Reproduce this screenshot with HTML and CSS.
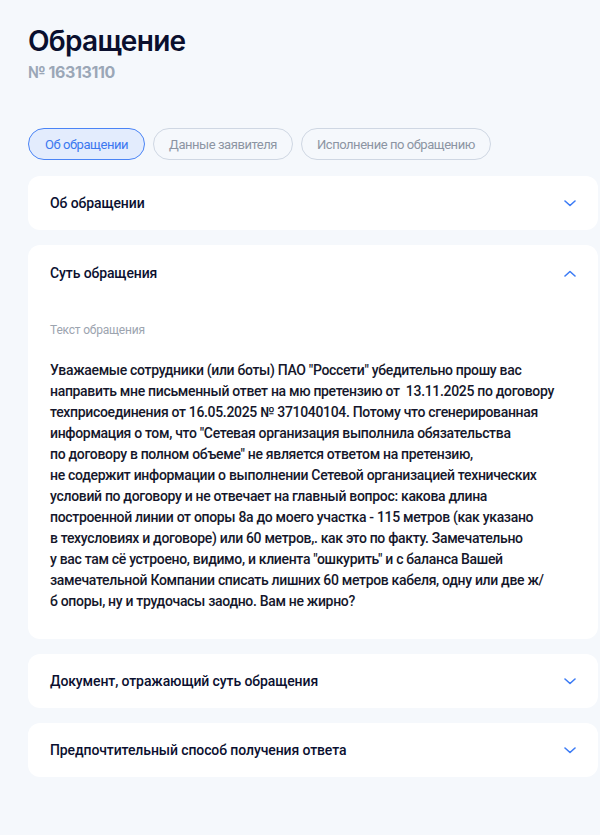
FILE: index.html
```html
<!DOCTYPE html>
<html lang="ru">
<head>
<meta charset="utf-8">
<title>Обращение</title>
<link rel="stylesheet" href="styles.css">
</head>
<body>
<main class="page">
  <header class="head">
    <h1 class="title">Обращение</h1>
    <div class="number">№ 16313110</div>
  </header>

  <nav class="tabs">
    <button class="tab tab-active">Об обращении</button>
    <button class="tab">Данные заявителя</button>
    <button class="tab">Исполнение по обращению</button>
  </nav>

  <section class="cards">
    <div class="card">
      <div class="card-head">
        <span class="card-title">Об обращении</span>
        <svg class="chev" width="12" height="7" viewBox="0 0 12 7"><path d="M1 1l5 4.5L11 1" fill="none" stroke="#3d7cf5" stroke-width="1.6" stroke-linecap="round" stroke-linejoin="round"/></svg>
      </div>
    </div>

    <div class="card card-open">
      <div class="card-head">
        <span class="card-title">Суть обращения</span>
        <svg class="chev" width="12" height="7" viewBox="0 0 12 7"><path d="M1 6l5-4.5L11 6" fill="none" stroke="#3d7cf5" stroke-width="1.6" stroke-linecap="round" stroke-linejoin="round"/></svg>
      </div>
      <div class="card-body">
        <div class="field-label">Текст обращения</div>
        <p class="field-text">Уважаемые сотрудники (или боты) ПАО "Россети" убедительно прошу вас<br>направить мне письменный ответ на мю претензию от&nbsp; 13.11.2025 по договору<br>техприсоединения от 16.05.2025 № 371040104. Потому что сгенерированная<br>информация о том, что "Сетевая организация выполнила обязательства<br>по договору в полном объеме" не является ответом на претензию,<br>не содержит информации о выполнении Сетевой организацией технических<br>условий по договору и не отвечает на главный вопрос: какова длина<br>построенной линии от опоры 8а до моего участка - 115 метров (как указано<br>в техусловиях и договоре) или 60 метров,. как это по факту. Замечательно<br>у вас там сё устроено, видимо, и клиента "ошкурить" и с баланса Вашей<br>замечательной Компании списать лишних 60 метров кабеля, одну или две ж/<br>б опоры, ну и трудочасы заодно. Вам не жирно?</p>
      </div>
    </div>

    <div class="card">
      <div class="card-head">
        <span class="card-title">Документ, отражающий суть обращения</span>
        <svg class="chev" width="12" height="7" viewBox="0 0 12 7"><path d="M1 1l5 4.5L11 1" fill="none" stroke="#3d7cf5" stroke-width="1.6" stroke-linecap="round" stroke-linejoin="round"/></svg>
      </div>
    </div>

    <div class="card">
      <div class="card-head">
        <span class="card-title">Предпочтительный способ получения ответа</span>
        <svg class="chev" width="12" height="7" viewBox="0 0 12 7"><path d="M1 1l5 4.5L11 1" fill="none" stroke="#3d7cf5" stroke-width="1.6" stroke-linecap="round" stroke-linejoin="round"/></svg>
      </div>
    </div>
  </section>
</main>
</body>
</html>
```

FILE: styles.css
```css
* { box-sizing: border-box; }

html, body {
  margin: 0;
  padding: 0;
  background: #f5f8fc;
}

body {
  font-family: Roboto, Inter, "Liberation Sans", sans-serif;
  color: #0b1030;
}

.page {
  padding: 23px 2px 40px 28px;
}

.head {
  display: flex;
  flex-direction: column;
}

.title {
  margin: 0;
  font-family: Inter, Roboto, sans-serif;
  font-size: 28px;
  line-height: 36px;
  font-weight: 600;
  letter-spacing: -0.7px;
  color: #0a0f2e;
}

.number {
  margin-top: 3px;
  font-family: Inter, Roboto, sans-serif;
  font-size: 16px;
  line-height: 20px;
  font-weight: 700;
  color: #9ba7b7;
  letter-spacing: -0.4px;
}

.tabs {
  display: flex;
  gap: 8px;
  margin-top: 46px;
}

.tab {
  height: 32px;
  padding: 0 15px;
  border-radius: 16px;
  border: 1px solid #cfd7e3;
  background: transparent;
  font-family: inherit;
  font-size: 13px;
  font-weight: 400;
  color: #8c95a3;
  letter-spacing: -0.45px;
}

.tab-active {
  padding: 0 16px;
  border-color: #4a84f6;
  background: #e3ecfd;
  color: #3b78f0;
}

.cards {
  display: flex;
  flex-direction: column;
  gap: 15px;
  margin-top: 16px;
}

.card {
  background: #ffffff;
  border-radius: 12px;
}

.card-head {
  display: flex;
  align-items: center;
  justify-content: space-between;
  height: 54px;
  padding: 0 22px;
}

.card-open .card-head {
  height: 56px;
}

.card-title {
  font-size: 14px;
  font-weight: 500;
  color: #0b1030;
  letter-spacing: -0.1px;
}

.chev {
  display: block;
}

.card-body {
  padding: 21px 22px 27px;
}

.field-label {
  font-size: 12px;
  line-height: 16px;
  color: #9ca4af;
  letter-spacing: -0.2px;
}

.field-text {
  margin: 22px 0 0;
  font-size: 14px;
  line-height: 21px;
  font-weight: 500;
  color: #15172b;
  letter-spacing: -0.32px;
}
```
